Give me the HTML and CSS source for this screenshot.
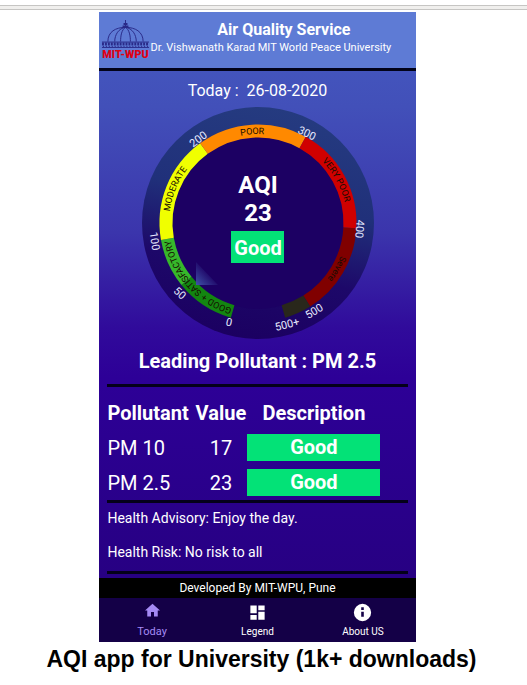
FILE: index.html
```html
<!DOCTYPE html>
<html lang="en">
<head>
<meta charset="utf-8">
<meta name="viewport" content="width=device-width, initial-scale=1">
<title>AQI app for University</title>
<link rel="stylesheet" href="styles.css">
</head>
<body>
<div class="divider"></div>
<figure class="showcase">
  <div class="phone">
    <header class="header">
      <svg class="logo" viewBox="0 0 50 42" role="img" aria-label="MIT-WPU logo">
        <g fill="none" stroke="#292a88" stroke-width="1">
          <path d="M7 22C7 12 15 7.500 25 7.500S43 12 43 22M14 22C14 15 18 8.500 25 7.500C32 8.500 36 15 36 22M20 22C20 16 21 10 25 7.500C29 10 30 16 30 22M25 0V8"/>
          <path d="M22 6.500H28M23 4H27" stroke-width="2"/>
          <path d="M1 22.500H49M1 28H49" stroke-width="1"/>
          <path d="M1 24.500H49" stroke-width="3" stroke-dasharray="2 1"/>
          <path d="M2 27H49" stroke-width="1" stroke-dasharray="1 2"/>
        </g>
        <text class="logo-name" x="25" y="39">MIT-WPU</text>
      </svg>
      <div class="heading">
        <h1>Air Quality Service</h1>
        <p>Dr. Vishwanath Karad MIT World Peace University</p>
      </div>
    </header>
    <main class="content">
      <p class="date">Today :&nbsp; 26-08-2020</p>
      <svg class="gauge" viewBox="-116 -116 232 232" role="img" aria-label="AQI 23, Good">
        <defs>
          <linearGradient id="dial" x1="0.600" y1="0" x2="0.400" y2="1">
            <stop offset="0" stop-color="#253b80"/>
            <stop offset="0.400" stop-color="#20307a"/>
            <stop offset="0.700" stop-color="#1d0869"/>
            <stop offset="1" stop-color="#1b0061"/>
          </linearGradient>
          <linearGradient id="needle" x1="0" y1="1" x2="0.600" y2="0.400">
            <stop offset="0" stop-color="#4052a8"/>
            <stop offset="1" stop-color="#1c0063"/>
          </linearGradient>
          <path id="track" d="M0 89A89 89 0 0 1 0 -89A89 89 0 0 1 0 89"/>
        </defs>
        <circle r="116" fill="url(#dial)"/>
        <circle r="86" fill="#1c0063"/>
        <g id="bands" fill="none" stroke-width="13"></g>
        <path d="M-62 39V62H-40Z" fill="url(#needle)"/>
        <g class="band-label">
          <text><textPath href="#track" startOffset="13.300%">GOOD + SATISFACTORY</textPath></text>
          <text><textPath href="#track" startOffset="31.200%">MODERATE</textPath></text>
          <text><textPath href="#track" startOffset="49%">POOR</textPath></text>
          <text><textPath href="#track" startOffset="67%">VERY POOR</textPath></text>
          <text><textPath href="#track" startOffset="83.400%">Severe</textPath></text>
        </g>
        <g class="tick">
          <text transform="translate(-29 99) rotate(12)" y="4">0</text>
          <text transform="translate(-78 70) rotate(42)" y="4">50</text>
          <text transform="translate(-103 18) rotate(82)" y="4">100</text>
          <text transform="translate(-60 -84) rotate(-37)" y="4">200</text>
          <text transform="translate(49 -90) rotate(26)" y="4">300</text>
          <text transform="translate(102 6) rotate(94)" y="4">400</text>
          <text transform="translate(56 88) rotate(-32)" y="4">500</text>
          <text transform="translate(29 101) rotate(-14)" y="4">500+</text>
        </g>
        <g class="reading">
          <text y="-30">AQI</text>
          <text y="-2">23</text>
          <rect x="-27" y="8" width="53" height="32" fill="#03e277"/>
          <text class="status" y="32">Good</text>
        </g>
      </svg>
      <h2 class="leading">Leading Pollutant : PM 2.5</h2>
      <section class="panel">
        <table class="pollutants">
          <colgroup><col class="col-name"><col class="col-value"><col></colgroup>
          <thead><tr><th scope="col">Pollutant</th><th scope="col">Value</th><th scope="col">Description</th></tr></thead>
          <tbody>
            <tr><td>PM 10</td><td>17</td><td><span class="badge">Good</span></td></tr>
            <tr><td>PM 2.5</td><td>23</td><td><span class="badge">Good</span></td></tr>
          </tbody>
        </table>
      </section>
      <section class="panel health">
        <p>Health Advisory: Enjoy the day.</p>
        <p>Health Risk: No risk to all</p>
      </section>
      <div class="rule"></div>
    </main>
    <footer class="credit">Developed By MIT-WPU, Pune</footer>
    <nav class="tabs">
      <a class="active" href="#today"><svg viewBox="2 2 20 20"><path d="M10 20v-6h4v6h5v-8h3L12 3 2 12h3v8z"/></svg>Today</a>
      <a href="#legend"><svg viewBox="0 0 24 24"><path d="M3 13h8V3H3zm0 8h8v-6H3zm10 0h8V11h-8zm0-18v6h8V3z"/></svg>Legend</a>
      <a href="#about"><svg viewBox="1 1 22 22"><path d="M12 2a10 10 0 1 0 0 20 10 10 0 0 0 0-20zm1.500 15h-3v-6h3zm0-8h-3V6h3z"/></svg>About US</a>
    </nav>
  </div>
  <figcaption>AQI app for University (1k+ downloads)</figcaption>
</figure>
<script src="gauge.js"></script>
</body>
</html>
```
FILE: gauge.js
```js
// Coloured bands of the dial; angles are clockwise degrees from the top.
const bands = [
  [196, 231, '#138611'],
  [231, 260, '#36b82b'],
  [260, 324, '#f0ff00'],
  [324, 389, '#ff8900'],
  [389, 453, '#d00000'],
  [453, 508, '#800000'],
  [508, 524, '#29271b']
];
const radius = 92;
const point = (deg) => {
  const a = deg * Math.PI / 180;
  return `${radius * Math.sin(a)} ${-radius * Math.cos(a)}`;
};
const group = document.getElementById('bands');
for (const [from, to, color] of bands) {
  const path = document.createElementNS('http://www.w3.org/2000/svg', 'path');
  path.setAttribute('d', `M${point(from)}A${radius} ${radius} 0 0 1 ${point(to)}`);
  path.setAttribute('stroke', color);
  group.appendChild(path);
}
```
FILE: styles.css
```css
* { box-sizing: border-box; }

body {
  margin: 0;
  padding-top: 5px;
  background: #fff;
  font-family: Roboto, "Liberation Sans", sans-serif;
}

h1, h2, p { margin: 0; }

.divider {
  height: 5px;
  border: solid #c6c5c3;
  border-width: 1px 0;
  background: #f0efed;
}

.showcase {
  margin: 2px 0 0;
  padding-right: 12px;
}

.phone {
  width: 60vw;
  min-width: 316px;
  margin: 0 auto;
  color: #fff;
  background: linear-gradient(#455bc2 0, #4250b9 15%, #3b35ac 35%, #300b9b 50%, #2d0097 58%, #25007c 100%);
}

.header {
  display: flex;
  align-items: flex-start;
  min-height: 59px;
  padding: 8px 0 0 2px;
  border-bottom: 3px solid #02031a;
  background: #5e7bd5;
}

.logo { flex: none; width: 49px; }

.logo-name {
  fill: #e00012;
  font-size: 11px;
  font-weight: 900;
  text-anchor: middle;
}

.heading { white-space: nowrap; }

.heading h1 {
  padding-left: 26px;
  font-size: 16px;
  line-height: 20px;
  text-align: center;
}

.heading p {
  font-size: 11px;
  line-height: 16px;
}

.content { padding: 10px 8px 4px; }

.date {
  font-size: 16px;
  line-height: 20px;
  text-align: center;
}

.gauge {
  display: block;
  width: 232px;
  margin: 6px auto 0;
}

.band-label {
  fill: #160c00;
  font-size: 9px;
  text-anchor: middle;
}

.tick {
  fill: #e8ebff;
  font-size: 11px;
  text-anchor: middle;
}

.reading {
  fill: #fff;
  font-size: 24px;
  font-weight: 700;
  text-anchor: middle;
}

.status { font-size: 20px; }

.leading {
  padding: 10px 0 11px;
  font-size: 20px;
  line-height: 24px;
  text-align: center;
}

.panel, .rule { border-top: 3px solid #04001a; }

.panel { padding-top: 9px; }

.pollutants {
  width: 273px;
  border-collapse: collapse;
  table-layout: fixed;
  font-size: 20px;
}

.col-name { width: 87px; }
.col-value { width: 53px; }

.pollutants th, .pollutants td {
  height: 35px;
  padding: 0;
  text-align: center;
  white-space: nowrap;
}

.pollutants th { height: 34px; }

.pollutants th:first-child, .pollutants td:first-child { text-align: left; }

.badge {
  display: block;
  background: #03e277;
  font-weight: 700;
  line-height: 27px;
}

.health {
  padding: 5px 0 9px;
  font-size: 14px;
  line-height: 20px;
}

.health p + p { margin-top: 14px; }

.credit {
  background: #000;
  font-size: 12px;
  line-height: 20px;
  text-align: center;
}

.tabs {
  display: grid;
  grid-template-columns: repeat(3, 1fr);
  background: #140047;
}

.tabs a {
  display: flex;
  flex-direction: column;
  align-items: center;
  gap: 3px;
  padding: 5px 0 3px;
  color: #fff;
  font-size: 10px;
  line-height: 14px;
  text-decoration: none;
}

.tabs svg {
  width: 19px;
  fill: currentColor;
}

.tabs .active {
  color: #a58af5;
  font-size: 11px;
}

.tabs .active svg {
  width: 15px;
  margin-bottom: 4px;
}

figcaption {
  padding: 3px 0 0 8px;
  color: #000;
  font-family: "Liberation Sans", sans-serif;
  font-size: 23px;
  font-weight: 700;
  line-height: 28px;
  text-align: center;
}
```
